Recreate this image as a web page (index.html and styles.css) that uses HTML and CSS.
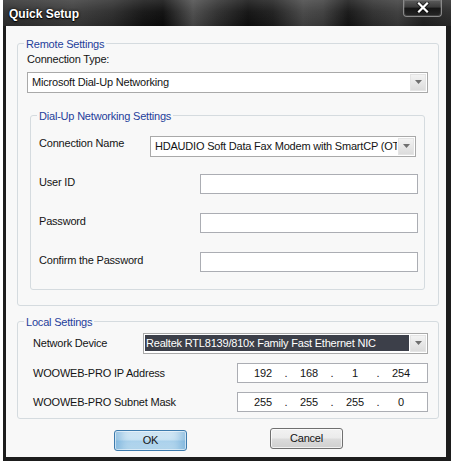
FILE: index.html
```html
<!DOCTYPE html>
<html>
<head>
<meta charset="utf-8">
<title>Quick Setup</title>
<link rel="stylesheet" href="styles.css">
</head>
<body>
<div class="window">
  <div class="titlebar">
    <span class="title">Quick Setup</span>
    <div class="close">
      <svg width="14" height="11" viewBox="0 0 14 11"><path d="M3 1.5 L11 9.5 M11 1.5 L3 9.5" stroke="#000" stroke-width="4" stroke-linecap="square" opacity="0.55"/><path d="M3 1.5 L11 9.5 M11 1.5 L3 9.5" stroke="#fff" stroke-width="2.2" stroke-linecap="square"/></svg>
    </div>
  </div>
  <div class="frame">
    <div class="client">
      <fieldset class="group remote">
        <legend>Remote Settings</legend>
        <div class="remote-body">
          <div class="conn-label">Connection Type:</div>
          <div class="combo">
            <span class="value">Microsoft Dial-Up Networking</span>
            <span class="arrow"><svg width="7" height="4" viewBox="0 0 7 4"><path d="M0 0 H7 L3.5 4 Z" fill="#6f6f6f"/></svg></span>
          </div>
          <fieldset class="group dialup">
            <legend>Dial-Up Networking Settings</legend>
            <div class="dialup-body">
              <div class="row">
                <span class="label combo-label">Connection Name</span>
                <div class="combo name-combo">
                  <span class="value">HDAUDIO Soft Data Fax Modem with SmartCP (OT</span>
                  <span class="arrow"><svg width="7" height="4" viewBox="0 0 7 4"><path d="M0 0 H7 L3.5 4 Z" fill="#6f6f6f"/></svg></span>
                </div>
              </div>
              <div class="row after-combo">
                <span class="label">User ID</span>
                <div class="field"></div>
              </div>
              <div class="row">
                <span class="label">Password</span>
                <div class="field"></div>
              </div>
              <div class="row">
                <span class="label">Confirm the Password</span>
                <div class="field"></div>
              </div>
            </div>
          </fieldset>
        </div>
      </fieldset>

      <fieldset class="group local">
        <legend>Local Settings</legend>
        <div class="local-body">
          <div class="row">
            <span class="label">Network Device</span>
            <div class="combo device-combo">
              <span class="value selected">Realtek RTL8139/810x Family Fast Ethernet NIC</span>
              <span class="arrow"><svg width="7" height="4" viewBox="0 0 7 4"><path d="M0 0 H7 L3.5 4 Z" fill="#6f6f6f"/></svg></span>
            </div>
          </div>
          <div class="row">
            <span class="label">WOOWEB-PRO IP Address</span>
            <div class="ip">
              <span class="oct">192</span><span class="dot">.</span><span class="oct">168</span><span class="dot">.</span><span class="oct">1</span><span class="dot">.</span><span class="oct">254</span>
            </div>
          </div>
          <div class="row">
            <span class="label">WOOWEB-PRO Subnet Mask</span>
            <div class="ip">
              <span class="oct">255</span><span class="dot">.</span><span class="oct">255</span><span class="dot">.</span><span class="oct">255</span><span class="dot">.</span><span class="oct">0</span>
            </div>
          </div>
        </div>
      </fieldset>

      <div class="buttons">
        <button class="btn ok">OK</button>
        <button class="btn cancel">Cancel</button>
      </div>
    </div>
  </div>
</div>
</body>
</html>
```

FILE: styles.css
```css
* {
  box-sizing: border-box;
}

html,
body {
  margin: 0;
  padding: 0;
}

body {
  width: 451px;
  height: 464px;
  overflow: hidden;
  background: #ffffff;
  font-family: "Liberation Sans", Arial, sans-serif;
  font-size: 11px;
  line-height: 13px;
  letter-spacing: -0.2px;
  color: #141414;
}

.window {
  margin-left: 3px;
  width: 448px;
}

.titlebar {
  height: 26px;
  display: flex;
  align-items: flex-start;
  background:
    linear-gradient(180deg, rgba(255, 255, 255, 0.14) 0, rgba(255, 255, 255, 0.04) 45%, rgba(0, 0, 0, 0.1) 100%),
    linear-gradient(90deg, #2e2e2e 0, #3a3a3a 70px, #2a2a2a 110px, #121212 140px, #0b0b0b 160px, #4a4a4a 190px, #2c2c2c 215px, #0f0f0f 245px, #1c1c1c 270px, #444 300px, #3c3c3c 320px, #131313 345px, #2d2d2d 370px, #3a3a3a 395px, #202020 420px, #2a2a2a 448px);
}

.title {
  padding: 3px 0 0 6px;
  line-height: 23px;
  font-size: 12px;
  font-weight: bold;
  letter-spacing: 0;
  color: #ffffff;
  text-shadow: 0 0 3px #000, 0 1px 1px #000;
}

.close {
  margin-left: auto;
  margin-right: 9px;
  width: 39px;
  height: 17px;
  border: 1px solid #8a8a8a;
  border-top: none;
  border-radius: 0 0 4px 4px;
  background: linear-gradient(180deg, #5c5c5c 0, #3a3a3a 45%, #151515 50%, #262626 100%);
  box-shadow: inset 0 0 0 1px rgba(255, 255, 255, 0.12);
  display: flex;
  align-items: center;
  justify-content: center;
  padding-bottom: 1px;
}

.frame {
  background: #1d1d1d;
  padding: 0 5px 4px 3px;
}

.client {
  height: 431px;
  background: #f8f8f8;
  padding: 9px 7px 0 11px;
}

fieldset.group {
  margin: 0;
  padding: 0;
  border: 1px solid #d5dbdf;
  border-radius: 3px;
  min-width: 0;
}

fieldset.group > legend {
  padding: 3px 2px 0;
  margin-left: 6px;
  color: #1f409b;
}

.remote-body {
  padding: 2px 10px 15px 9px;
}

.conn-label {
  margin-bottom: 6px;
}

.combo {
  height: 21px;
  border: 1px solid #a9a9a9;
  background: #ffffff;
  display: flex;
}

.combo .value {
  flex: 1;
  min-width: 0;
  overflow: hidden;
  white-space: nowrap;
  padding-left: 4px;
  line-height: 19px;
}

.combo .arrow {
  width: 16px;
  margin: 1px;
  background: linear-gradient(180deg, #f3f3f3, #dcdcdc);
  border: 1px solid #e4e4e4;
  display: flex;
  align-items: center;
  justify-content: center;
  padding-bottom: 2px;
}

fieldset.group.dialup {
  margin: 14px 3px 0;
}

.dialup-body {
  padding: 13px 6px 17px 8px;
}

.row {
  display: flex;
  justify-content: space-between;
  align-items: flex-start;
}

.row + .row {
  margin-top: 19px;
}

.row.after-combo {
  margin-top: 17px;
}

.row .label {
  margin-top: 2px;
}

.row .combo-label {
  margin-top: 1px;
}

.name-combo {
  width: 266px;
  margin-right: 2px;
}

.field {
  width: 218px;
  height: 20px;
  border: 1px solid #abadb3;
  background: #ffffff;
}

fieldset.group.local {
  margin-top: 7px;
}

.local-body {
  padding: 4px 10px 6px 15px;
}

.local-body .row {
  align-items: center;
}

.local-body .row + .row {
  margin-top: 9px;
}

.local-body .row .label {
  margin-top: 0;
}

.device-combo {
  width: 285px;
}

.device-combo .value.selected {
  margin: 1px 0 2px 1px;
  padding-left: 1px;
  line-height: 16px;
  background: #3c3f49;
  color: #ffffff;
}

.ip {
  width: 191px;
  height: 20px;
  border: 1px solid #abadb3;
  background: #ffffff;
  display: flex;
  padding-left: 5px;
}

.ip .oct {
  width: 40px;
  text-align: center;
  line-height: 18px;
}

.ip .dot {
  width: 6px;
  text-align: center;
  line-height: 18px;
}

.buttons {
  margin-top: 9px;
  padding-left: 97px;
  display: flex;
  align-items: flex-start;
}

.btn {
  width: 73px;
  height: 21px;
  padding: 0;
  border-radius: 3px;
  font: inherit;
  letter-spacing: -0.2px;
  color: #141414;
  text-align: center;
  line-height: 19px;
}

.btn.ok {
  margin-top: 2px;
  border: 1px solid #3d7bad;
  background: linear-gradient(180deg, #dcedf8 0, #c6e1f2 48%, #a9d0eb 52%, #bcdcf0 100%);
  box-shadow: inset 0 0 0 1px rgba(255, 255, 255, 0.55), inset 10px 0 8px -4px rgba(80, 150, 205, 0.45), inset -10px 0 8px -4px rgba(80, 150, 205, 0.45);
}

.btn.cancel {
  margin-left: 83px;
  border: 1px solid #707070;
  background: linear-gradient(180deg, #f2f2f2 0, #ebebeb 48%, #dcdcdc 52%, #cfcfcf 100%);
  box-shadow: inset 0 0 0 1px rgba(255, 255, 255, 0.7);
}
```
